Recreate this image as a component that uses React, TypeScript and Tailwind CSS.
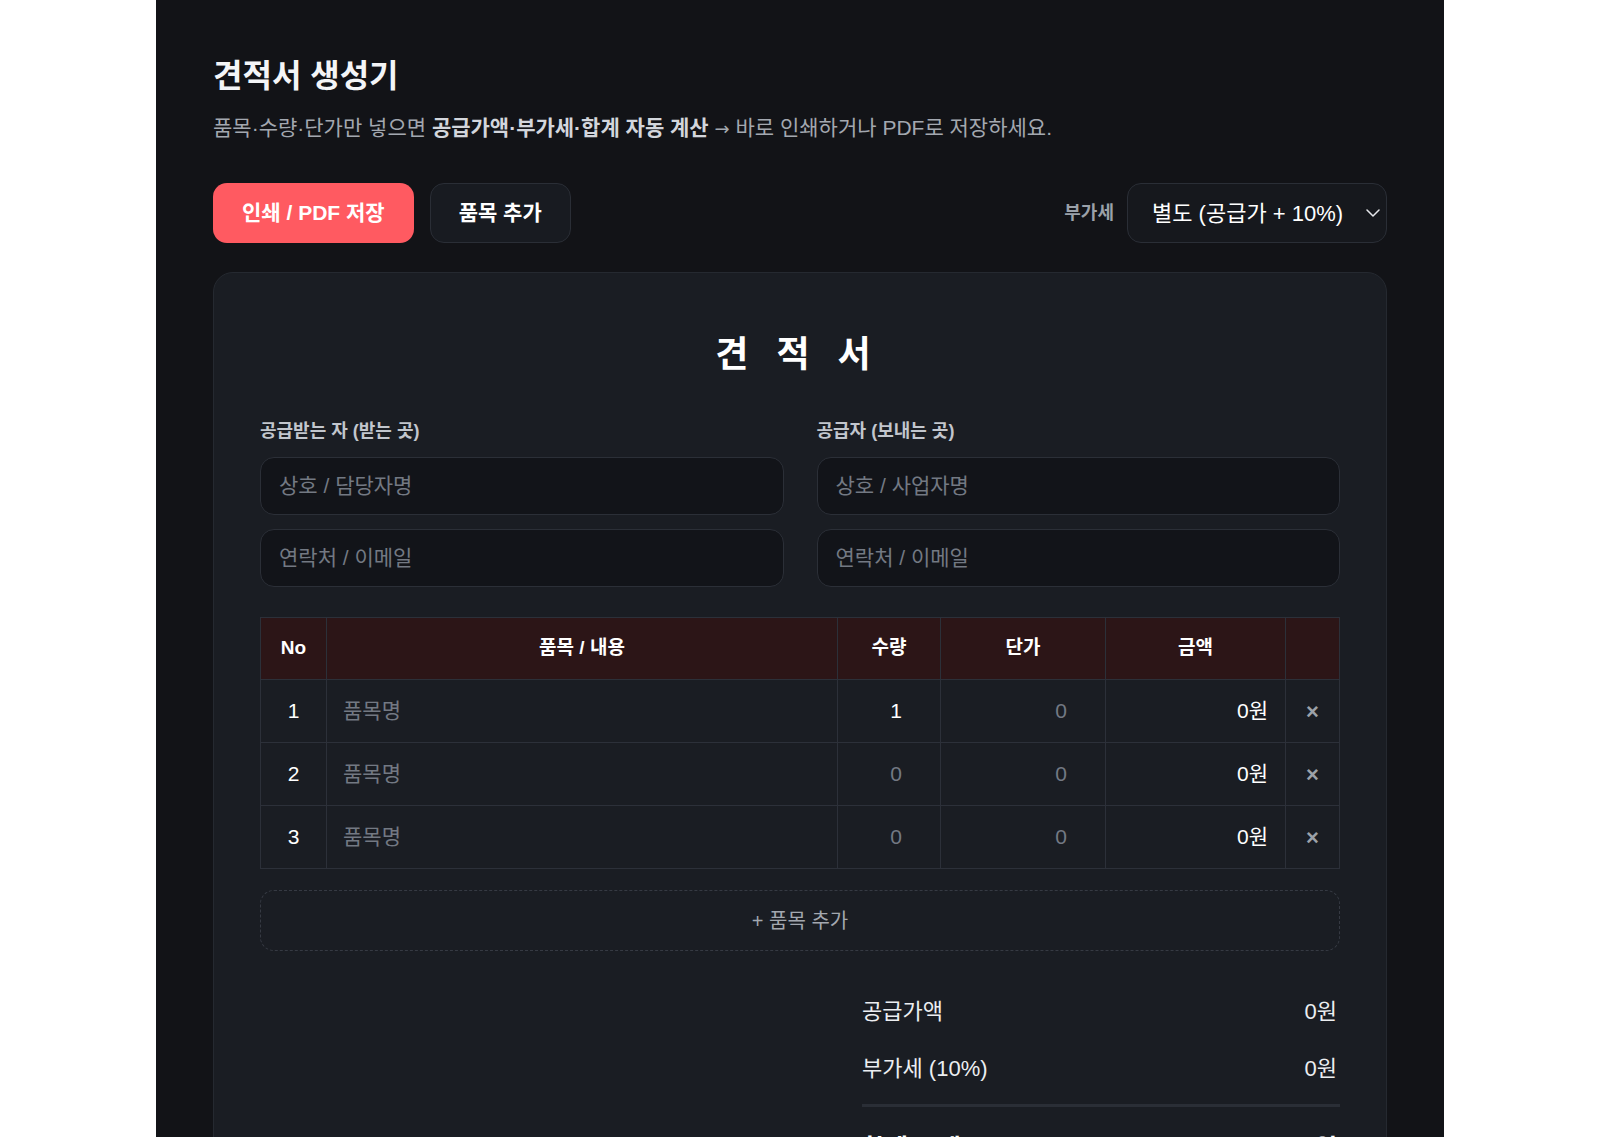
import { useState } from "react";

type Item = { id: number; name: string; qty: string; price: string };

const initialItems: Item[] = [
  { id: 1, name: "", qty: "1", price: "" },
  { id: 2, name: "", qty: "", price: "" },
  { id: 3, name: "", qty: "", price: "" },
];

const won = (n: number) => `${n.toLocaleString("ko-KR")}원`;

function Chevron() {
  return (
    <svg width="14" height="8" viewBox="0 0 14 8" fill="none" className="shrink-0 text-[#e5e7eb]">
      <path d="M1 1l6 6 6-6" stroke="currentColor" strokeWidth="1.5" strokeLinecap="round" strokeLinejoin="round" />
    </svg>
  );
}

function PartyInputs({ label, namePh }: { label: string; namePh: string }) {
  return (
    <div className="flex flex-col">
      <div className="text-[18px] leading-[24px] font-bold text-[#c2c6cd]">{label}</div>
      <input
        placeholder={namePh}
        className="mt-[14px] h-[58px] rounded-[14px] border border-[#2b2f37] bg-[#121419] px-[18px] text-[21px] text-white outline-none placeholder:text-[#737983]"
      />
      <input
        placeholder="연락처 / 이메일"
        className="mt-[14px] h-[58px] rounded-[14px] border border-[#2b2f37] bg-[#121419] px-[18px] text-[21px] text-white outline-none placeholder:text-[#737983]"
      />
    </div>
  );
}

export default function App() {
  const [items, setItems] = useState<Item[]>(initialItems);

  const supply = items.reduce((s, it) => s + (Number(it.qty) || 0) * (Number(it.price) || 0), 0);
  const vat = Math.round(supply * 0.1);

  const update = (id: number, key: keyof Item, v: string) =>
    setItems((prev) => prev.map((it) => (it.id === id ? { ...it, [key]: v } : it)));

  const addItem = () =>
    setItems((prev) => [...prev, { id: Date.now(), name: "", qty: "", price: "" }]);

  return (
    <div className="min-h-screen bg-white font-['Liberation_Sans','Noto_Sans_CJK_KR',sans-serif]">
      <div className="mx-auto w-[1288px] bg-[#121317] px-[57px] pt-[54px] pb-24">
        {/* 헤더 */}
        <h1 className="text-[32px] leading-[44px] font-bold text-[#f4f5f7]">견적서 생성기</h1>
        <p className="mt-4 text-[21px] leading-[28px] text-[#a3a8b0]">
          품목·수량·단가만 넣으면{" "}
          <b className="font-bold text-[#d3d6dc]">공급가액·부가세·합계 자동 계산</b>{" "}
          <span className="font-['DejaVu_Sans',sans-serif] text-[18px]">→</span> 바로 인쇄하거나 PDF로 저장하세요.
        </p>

        <div className="mt-[40px] flex items-center justify-between">
          <div className="flex gap-4">
            <button className="h-[60px] rounded-[14px] bg-[#ff5a61] px-[29px] text-[21px] font-bold text-white">
              인쇄 / PDF 저장
            </button>
            <button
              onClick={addItem}
              className="h-[60px] rounded-[14px] border border-[#2a2e36] bg-[#181b21] px-[28px] text-[21px] font-bold text-white"
            >
              품목 추가
            </button>
          </div>
          <div className="flex items-center gap-[13px]">
            <span className="text-[18px] font-semibold text-[#9ba1a9]">부가세</span>
            <div className="flex h-[60px] w-[260px] items-center justify-between rounded-[14px] border border-[#2a2e36] bg-[#16181d] pl-[24px] pr-[6px] text-[22px] text-white">
              <span>별도 (공급가 + 10%)</span>
              <Chevron />
            </div>
          </div>
        </div>

        {/* 견적서 카드 */}
        <div className="mt-[29px] rounded-[20px] border border-[#252930] bg-[#1a1d23] px-[46px] pt-[60px] pb-16">
          <h2 className="pr-[5px] text-center text-[36px] leading-[44px] font-bold tracking-[0.25em] text-white">
            견 적 서
          </h2>

          <div className="mt-[42px] grid grid-cols-2 gap-x-[33px]">
            <PartyInputs label="공급받는 자 (받는 곳)" namePh="상호 / 담당자명" />
            <PartyInputs label="공급자 (보내는 곳)" namePh="상호 / 사업자명" />
          </div>

          <table className="mt-[30px] w-full table-fixed border-collapse border border-[#2c3039] text-[21px]">
            <colgroup>
              <col className="w-[66px]" />
              <col className="w-[511px]" />
              <col className="w-[103px]" />
              <col className="w-[165px]" />
              <col className="w-[180px]" />
              <col className="w-[54px]" />
            </colgroup>
            <thead>
              <tr className="h-[62px] bg-[#2c1517] text-[19px] font-bold text-white">
                <th className="border border-[#2c3039]">No</th>
                <th className="border border-[#2c3039]">품목 / 내용</th>
                <th className="border border-[#2c3039]">수량</th>
                <th className="border border-[#2c3039]">단가</th>
                <th className="border border-[#2c3039]">금액</th>
                <th className="border border-[#2c3039]"></th>
              </tr>
            </thead>
            <tbody>
              {items.map((it, idx) => (
                <tr key={it.id} className="h-[63px] text-white">
                  <td className="border border-[#2c3039] text-center">{idx + 1}</td>
                  <td className="border border-[#2c3039] pl-4 pr-3">
                    <input
                      value={it.name}
                      onChange={(e) => update(it.id, "name", e.target.value)}
                      placeholder="품목명"
                      className="w-full bg-transparent outline-none placeholder:text-[#737983]"
                    />
                  </td>
                  <td className="border border-[#2c3039] pr-[38px]">
                    <input
                      value={it.qty}
                      onChange={(e) => update(it.id, "qty", e.target.value)}
                      placeholder="0"
                      className="w-full bg-transparent text-right outline-none placeholder:text-[#737983]"
                    />
                  </td>
                  <td className="border border-[#2c3039] pr-[38px]">
                    <input
                      value={it.price}
                      onChange={(e) => update(it.id, "price", e.target.value)}
                      placeholder="0"
                      className="w-full bg-transparent text-right outline-none placeholder:text-[#737983]"
                    />
                  </td>
                  <td className="border border-[#2c3039] pr-[17px] text-right">
                    {won((Number(it.qty) || 0) * (Number(it.price) || 0))}
                  </td>
                  <td className="border border-[#2c3039] text-center">
                    <button
                      onClick={() => setItems((prev) => prev.filter((p) => p.id !== it.id))}
                      className="text-[22px] font-bold text-[#9ca1a9]"
                    >
                      ×
                    </button>
                  </td>
                </tr>
              ))}
            </tbody>
          </table>

          <button
            onClick={addItem}
            className="mt-[21px] h-[61px] w-full rounded-[14px] border border-dashed border-[#363a43] text-[20px] text-[#a3a8b0]"
          >
            + 품목 추가
          </button>

          {/* 합계 */}
          <div className="mt-[44px] ml-auto w-[478px] text-[22px] text-[#eceef1]">
            <div className="flex h-[32px] items-center justify-between pr-[3px]">
              <span>공급가액</span>
              <span>{won(supply)}</span>
            </div>
            <div className="mt-[25px] flex h-[32px] items-center justify-between pr-[3px]">
              <span>부가세 (10%)</span>
              <span>{won(vat)}</span>
            </div>
            <div className="mt-[20px] h-[3px] bg-[#2a2e36]" />
            <div className="mt-[24px] flex h-[36px] items-center justify-between pr-[3px] text-[25px] font-bold text-white">
              <span>합계 금액</span>
              <span>{won(supply + vat)}</span>
            </div>
          </div>
        </div>
      </div>
    </div>
  );
}
